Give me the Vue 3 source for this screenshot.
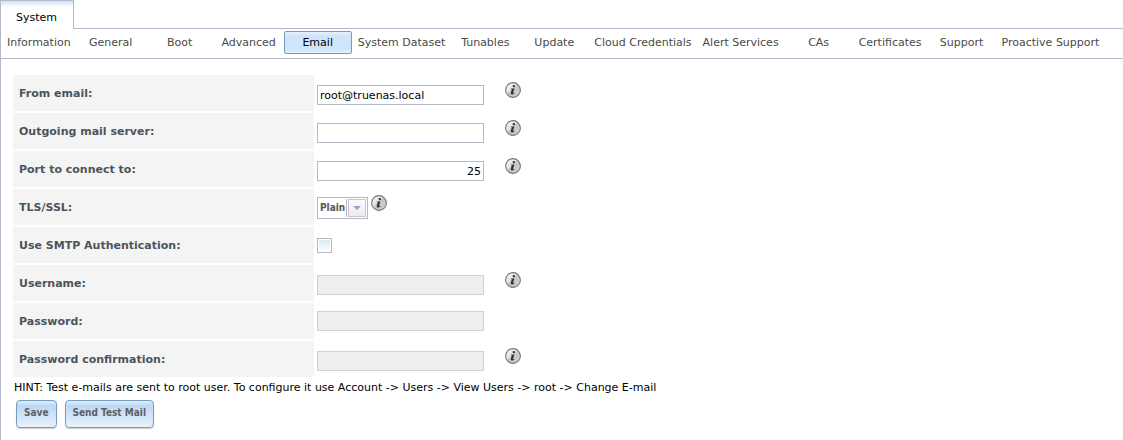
<script setup>
import { reactive, ref } from 'vue'

const tabs = [
  'Information', 'General', 'Boot', 'Advanced', 'Email', 'System Dataset', 'Tunables',
  'Update', 'Cloud Credentials', 'Alert Services', 'CAs', 'Certificates', 'Support', 'Proactive Support',
]
const activeTab = ref('Email')

const fields = [
  { id: 'from', label: 'From email:', type: 'text', help: true },
  { id: 'server', label: 'Outgoing mail server:', type: 'text', help: true },
  { id: 'port', label: 'Port to connect to:', type: 'text', help: true, numeric: true },
  { id: 'security', label: 'TLS/SSL:', type: 'select', help: true },
  { id: 'auth', label: 'Use SMTP Authentication:', type: 'checkbox' },
  { id: 'user', label: 'Username:', type: 'text', help: true, needsAuth: true },
  { id: 'password', label: 'Password:', type: 'password', needsAuth: true },
  { id: 'confirm', label: 'Password confirmation:', type: 'password', help: true, needsAuth: true },
]

const values = reactive({
  from: 'root@truenas.local',
  server: '',
  port: '25',
  security: 'Plain',
  auth: false,
  user: '',
  password: '',
  confirm: '',
})
</script>

<template>
  <main class="page">
    <header class="top">
      <button type="button" class="main-tab">System</button>
    </header>
    <div class="panel">
      <nav class="subtabs">
        <button
          v-for="tab in tabs"
          :key="tab"
          type="button"
          class="subtab"
          :class="{ active: tab === activeTab }"
          @click="activeTab = tab"
        >{{ tab }}</button>
      </nav>

      <form class="form" autocomplete="off" @submit.prevent>
        <div v-for="field in fields" :key="field.id" class="row">
          <label class="name" :for="field.id">{{ field.label }}</label>
          <div class="field" :class="[field.type, { helped: field.help }]">
            <div v-if="field.type === 'select'" class="picker">
              <select :id="field.id" v-model="values[field.id]">
                <option>Plain</option>
                <option>SSL</option>
                <option>TLS</option>
              </select>
              <span class="arrow" aria-hidden="true">
                <svg width="8" height="4" viewBox="0 0 8 4"><path d="M0 0h8L4 4z" fill="#8fa6cf" /></svg>
              </span>
            </div>
            <input
              v-else-if="field.type === 'checkbox'"
              :id="field.id"
              v-model="values[field.id]"
              class="tick"
              type="checkbox"
            >
            <input
              v-else
              :id="field.id"
              v-model="values[field.id]"
              class="box"
              :class="{ numeric: field.numeric }"
              :type="field.type"
              :disabled="field.needsAuth && !values.auth"
            >
            <svg v-if="field.help" class="help" width="16" height="16" viewBox="0 0 16 16" aria-hidden="true">
              <defs>
                <linearGradient :id="'shine-' + field.id" x1="0" y1="0" x2="1" y2="1">
                  <stop offset="0" stop-color="#ffffff" />
                  <stop offset="0.42" stop-color="#e2e2e2" />
                  <stop offset="0.46" stop-color="#c6c6c8" />
                  <stop offset="1" stop-color="#d2d2d4" />
                </linearGradient>
              </defs>
              <circle cx="8" cy="8" r="7.4" :fill="`url(#shine-${field.id})`" stroke="#767676" stroke-width="1.1" />
              <circle cx="8.8" cy="4.1" r="1.2" fill="#333" />
              <path d="M5.9 6.5h3.4l-1.2 4.4c-.1.5.3.5 1.3-.2l.2.5c-1.2 1.1-2 1.5-2.9 1.4-.9-.1-1.1-.7-.9-1.5l.9-3.5c.1-.4-.1-.5-1-.6z" fill="#333" />
            </svg>
          </div>
        </div>

        <p class="hint">HINT: Test e-mails are sent to root user. To configure it use Account -&gt; Users -&gt; View Users -&gt; root -&gt; Change E-mail</p>
        <div class="actions">
          <button type="submit" class="action">Save</button>
          <button type="button" class="action">Send Test Mail</button>
        </div>
      </form>
    </div>
  </main>
</template>

<style>
body {
  margin: 0;
  background: #fff;
}
#app {
  display: flex;
  min-height: 100vh;
}
</style>

<style scoped>
.page {
  flex: 1;
  min-width: 0;
  display: flex;
  flex-direction: column;
  font: 11px/16px "DejaVu Sans", Verdana, sans-serif;
  color: #000;
}
.page * {
  box-sizing: border-box;
}
button,
input,
select {
  font: inherit;
  margin: 0;
}
.top {
  display: flex;
  border-bottom: 1px solid #b4b8c8;
}
.main-tab {
  height: 29px;
  margin-bottom: -1px;
  padding: 5px 16px 0 15px;
  border: 1px solid #b4b8c8;
  border-bottom: 0;
  background: linear-gradient(#cfe3f7, #fff 6px);
  color: #000;
}
.panel {
  flex: 1;
  border-left: 1px solid #b4b8c8;
}
.subtabs {
  display: flex;
  gap: 1px;
  padding: 2px 1px 4px;
  border-bottom: 1px solid #b4b8c8;
}
.subtab {
  flex: none;
  min-width: 68px;
  height: 23px;
  padding: 0 4px;
  border: 1px solid transparent;
  border-radius: 2px;
  background: none;
  color: #494949;
  white-space: nowrap;
}
.subtab.active {
  border-color: #769dc0;
  background: linear-gradient(#e8f2fc, #cfe5fa 4px, #cfe5fa 17px, #e4f0fc);
  color: #000;
}
.form {
  padding: 16px 12px 12px;
}
.row {
  display: flex;
  gap: 3px;
  margin-bottom: 2px;
}
.name {
  flex: none;
  width: 301px;
  height: 36px;
  padding: 11px 6px 9px;
  background: #f4f4f4;
  color: #4b545c;
  font-weight: bold;
}
.field {
  display: flex;
  align-items: center;
  gap: 21px;
}
.box {
  width: 167px;
  height: 20px;
  padding: 0 2px;
  border: 1px solid #b4b8c5;
  border-radius: 0;
  background: #fff;
  color: #000;
}
.box:disabled {
  border-color: #d0d0d0;
  background: #eee;
}
.numeric {
  text-align: right;
}
.helped .box {
  margin-top: 4px;
}
.help {
  display: block;
  margin-bottom: 6px;
}
.field.select {
  gap: 3px;
}
.select .help {
  margin-bottom: 8px;
}
.picker {
  position: relative;
  width: 51px;
  height: 22px;
  margin-top: 2px;
}
.picker select {
  display: block;
  width: 100%;
  height: 100%;
  padding: 0 2px;
  border: 1px solid #b4b8c8;
  border-radius: 0;
  appearance: none;
  background: #fff;
  color: #555;
  font: bold 10px/20px "DejaVu Sans Condensed", "DejaVu Sans", sans-serif;
}
.arrow {
  position: absolute;
  top: 2px;
  right: 2px;
  bottom: 2px;
  width: 18px;
  display: flex;
  align-items: center;
  justify-content: center;
  border: 1px solid #c6c6cc;
  background: linear-gradient(#fafafa, #ececec);
  box-shadow: -1px 0 #fff, -2px 0 #b4b8c8;
  pointer-events: none;
}
.tick {
  width: 15px;
  height: 15px;
  border: 1px solid #b4b8c8;
  appearance: none;
  background: linear-gradient(#d8e8f4, #fff);
  box-shadow: inset 0 0 0 1px #fff;
}
.tick:checked {
  background: #769dc0;
}
.hint {
  margin: 0 1px;
  padding-top: 1px;
}
.actions {
  display: flex;
  gap: 8px;
  padding: 4px 3px;
}
.action {
  height: 28px;
  padding: 0 7px 2px;
  border: 1px solid #769dc0;
  border-radius: 4px;
  background: linear-gradient(#e2effb, #bcd8f4 5px, #e8f2fc);
  box-shadow: 0 1px 1px rgba(0, 0, 0, 0.2);
  color: #5c5f64;
  font: bold 10px/16px "DejaVu Sans Condensed", "DejaVu Sans", sans-serif;
  white-space: nowrap;
}
</style>
